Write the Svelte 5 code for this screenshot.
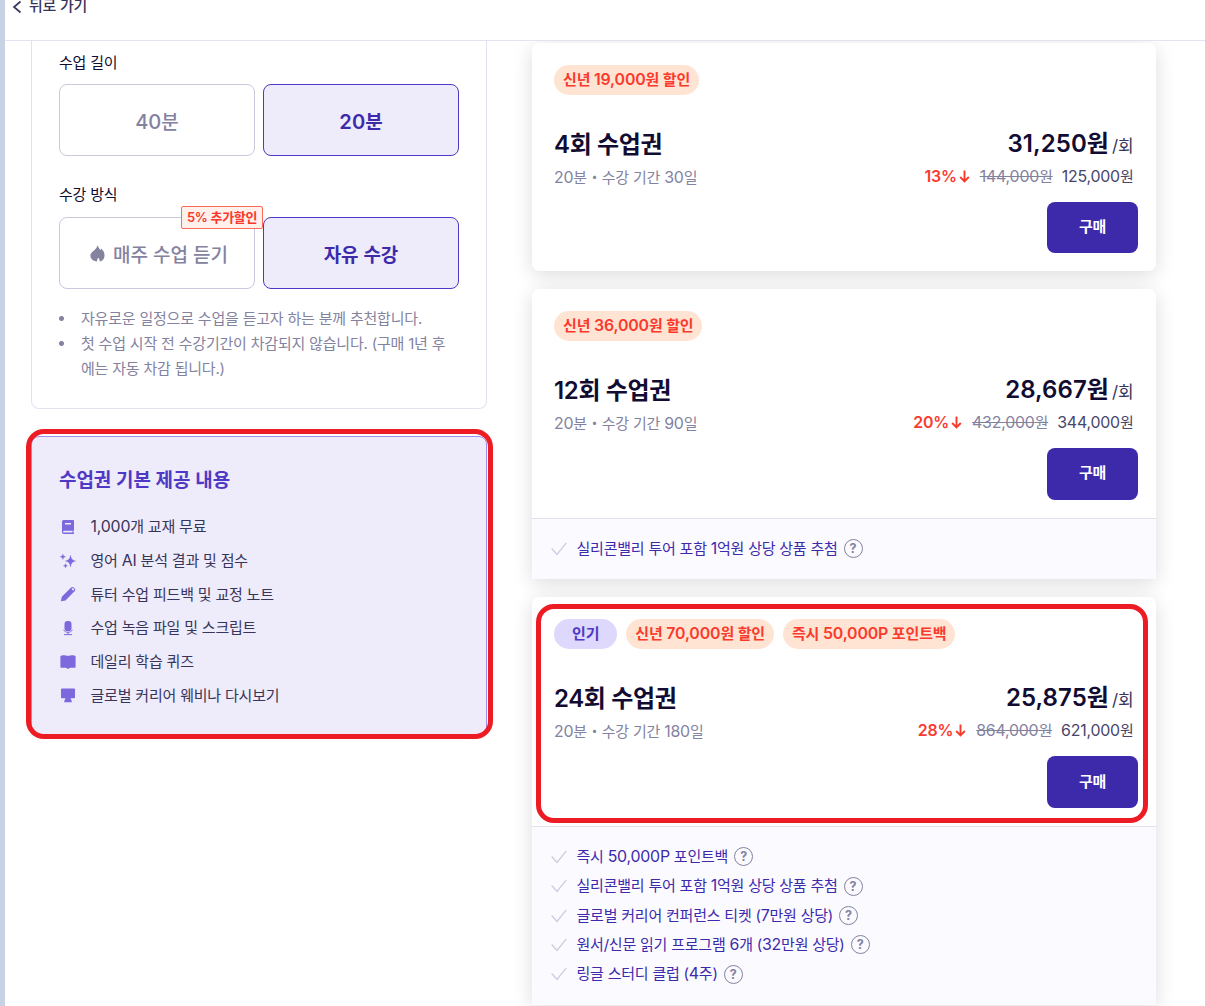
<script lang="ts">
  type Icon = 'book' | 'sparkle' | 'pencil' | 'mic' | 'open' | 'monitor';
  type Badge = { text: string; popular?: boolean };
  type Plan = {
    title: string;
    period: string;
    unit: string;
    rate: string;
    before: string;
    total: string;
    badges: Badge[];
    benefits: string[];
  };

  let length = $state<40 | 20>(20);
  let mode = $state<'weekly' | 'free'>('free');

  const includes: { icon: Icon; text: string }[] = [
    { icon: 'book', text: '1,000개 교재 무료' },
    { icon: 'sparkle', text: '영어 AI 분석 결과 및 점수' },
    { icon: 'pencil', text: '튜터 수업 피드백 및 교정 노트' },
    { icon: 'mic', text: '수업 녹음 파일 및 스크립트' },
    { icon: 'open', text: '데일리 학습 퀴즈' },
    { icon: 'monitor', text: '글로벌 커리어 웨비나 다시보기' },
  ];

  const plans: Plan[] = [
    {
      title: '4회 수업권',
      period: '20분・수강 기간 30일',
      unit: '31,250원',
      rate: '13%',
      before: '144,000원',
      total: '125,000원',
      badges: [{ text: '신년 19,000원 할인' }],
      benefits: [],
    },
    {
      title: '12회 수업권',
      period: '20분・수강 기간 90일',
      unit: '28,667원',
      rate: '20%',
      before: '432,000원',
      total: '344,000원',
      badges: [{ text: '신년 36,000원 할인' }],
      benefits: ['실리콘밸리 투어 포함 1억원 상당 상품 추첨'],
    },
    {
      title: '24회 수업권',
      period: '20분・수강 기간 180일',
      unit: '25,875원',
      rate: '28%',
      before: '864,000원',
      total: '621,000원',
      badges: [
        { text: '인기', popular: true },
        { text: '신년 70,000원 할인' },
        { text: '즉시 50,000P 포인트백' },
      ],
      benefits: [
        '즉시 50,000P 포인트백',
        '실리콘밸리 투어 포함 1억원 상당 상품 추첨',
        '글로벌 커리어 컨퍼런스 티켓 (7만원 상당)',
        '원서/신문 읽기 프로그램 6개 (32만원 상당)',
        '링글 스터디 클럽 (4주)',
      ],
    },
  ];

  // Latin runs are set slightly larger than Hangul so both look the same height.
  const runs = (text: string) => text.split(/([0-9A-Z,%]+)/).filter(Boolean);
  const isLatin = (run: string) => /^[0-9A-Z,%]/.test(run);
</script>

{#snippet mixed(text: string)}{#each runs(text) as run}{#if isLatin(run)}<span class="latin">{run}</span>{:else}{run}{/if}{/each}{/snippet}

<div class="page">
  <header class="topbar">
    <button class="back">
      <svg width="10" height="14" viewBox="0 0 10 14"><path d="M8.500 1.500 2 7l6.500 5.500" fill="none" stroke="currentColor" stroke-width="1.700" /></svg>
      <span>뒤로 가기</span>
    </button>
  </header>

  <main class="columns">
    <aside class="side">
      <section class="options">
        <h4>수업 길이</h4>
        <div class="choices">
          <button class="choice" class:active={length === 40} onclick={() => (length = 40)}><span>{@render mixed('40분')}</span></button>
          <button class="choice" class:active={length === 20} onclick={() => (length = 20)}><span>{@render mixed('20분')}</span></button>
        </div>
        <h4 class="second">수강 방식</h4>
        <div class="choices">
          <button class="choice" class:active={mode === 'weekly'} onclick={() => (mode = 'weekly')}>
            <svg class="flame" width="15" height="17" viewBox="0 0 15 17"><path d="M7.500 0c.5 2 2 3.500 2.800 5.200.5-.5.7-1 .8-1.600 2.400 1.900 3.600 4.400 3.400 7.400-.2 3-2 5-5 5.600.4-1.200.1-2.600-1.200-3.800-1.200 1.200-1.500 2.600-1.200 3.800C2.800 16 .4 13.500.4 10.500.4 6.500 7 5 7.500 0Z" fill="currentColor" /></svg>
            <span>매주 수업 듣기</span>
            <span class="extra">5% 추가할인</span>
          </button>
          <button class="choice" class:active={mode === 'free'} onclick={() => (mode = 'free')}>자유 수강</button>
        </div>
        <ul class="notes">
          <li>자유로운 일정으로 수업을 듣고자 하는 분께 추천합니다.</li>
          <li>첫 수업 시작 전 수강기간이 차감되지 않습니다. (구매 1년 후<br />에는 자동 차감 됩니다.)</li>
        </ul>
      </section>

      <section class="included">
        <h3>수업권 기본 제공 내용</h3>
        <ul>
          {#each includes as item}
            <li>
              <svg width="16" height="16" viewBox="0 0 16 16" fill="currentColor">
                {#if item.icon === 'book'}
                  <path fill-rule="evenodd" d="M3.500 1h9.500a1 1 0 0 1 1 1v9.500h-.6v2h.6V15H4a2 2 0 0 1-2-2V2.500A1.500 1.500 0 0 1 3.500 1ZM5 4v1.600h6V4H5Zm-1 7.700a.9.9 0 0 0 0 1.800h8.500v-1.800H4Z" />
                {:else if item.icon === 'sparkle'}
                  <path d="M10.500 2.200c.9 4 1.700 4.900 5.300 5.800-3.600.9-4.400 1.800-5.300 5.900-.9-4.100-1.700-5-5.300-5.900 3.600-.9 4.400-1.800 5.300-5.800ZM2.900 1c.5 1.900.9 2.300 2.700 2.700-1.800.5-2.200.9-2.700 2.800C2.400 4.600 2 4.200.2 3.700 2 3.300 2.400 2.900 2.900 1ZM5.500 10.600c.4 1.500.7 1.800 2.200 2.200-1.500.4-1.800.7-2.200 2.200-.4-1.500-.7-1.800-2.200-2.200 1.500-.4 1.800-.7 2.200-2.200Z" stroke="currentColor" stroke-width=".3" />
                {:else if item.icon === 'pencil'}
                  <path fill-rule="evenodd" d="M.9 15.300l.9-4.600 8.300-8.300 3.700 3.700-8.300 8.300-4.600.9ZM10.800 1.700a2.300 2.300 0 0 1 3.200 0l.5.5a2.300 2.300 0 0 1 0 3.200l-.7.700-3.700-3.700.7-.7Zm1.300.8-.6.6 1.600 1.600.6-.6a1.100 1.100 0 0 0-1.600-1.600Z" />
                {:else if item.icon === 'mic'}
                  <rect x="4.500" y="1" width="7" height="10.300" rx="3" />
                  <path d="M3.600 9.800c1.600 3.400 7.200 3.400 8.800 0M8 12.500v2M4 14.600h8" fill="none" stroke="currentColor" stroke-width="1" />
                {:else if item.icon === 'open'}
                  <path d="M1.200 1.700C3.500 1 6 1.200 8 2.100c2-.9 4.500-1.100 6.800-.4.5.1.8.4.8.9v10.400c0 .5-.3.8-.8.8h-4.600L8 15l-2.200-1.200H1.200c-.5 0-.8-.3-.8-.8V2.600c0-.5.3-.8.8-.9Z" />
                {:else}
                  <path d="M2 1.500h12a1 1 0 0 1 1 1v7.800a1 1 0 0 1-1 1h-3.500l1.300 3v.9H4.200v-.9l1.300-3H2a1 1 0 0 1-1-1V2.500a1 1 0 0 1 1-1Z" />
                {/if}
              </svg>
              <span>{@render mixed(item.text)}</span>
            </li>
          {/each}
        </ul>
      </section>
    </aside>

    <section class="plans">
      {#each plans as plan, i}
        <article class="plan" class:simple={!plan.benefits.length} class:marked={i === 2}>
          <div class="summary">
            <div class="badges">
              {#each plan.badges as badge}
                <span class="badge" class:popular={badge.popular}>{@render mixed(badge.text)}</span>
              {/each}
            </div>
            <div class="info">
              <div>
                <h2>{plan.title}</h2>
                <p class="period">{@render mixed(plan.period)}</p>
              </div>
              <div class="price">
                <p class="unit"><strong>{plan.unit}</strong><span>/회</span></p>
                <p class="total">
                  <b>{@render mixed(plan.rate)}</b>
                  <svg width="11" height="13" viewBox="0 0 11 13"><path d="M5.500.5v10.500M1.200 7l4.300 4.300L9.800 7" fill="none" stroke="currentColor" stroke-width="1.900" /></svg>
                  <s>{@render mixed(plan.before)}</s>
                  <span>{@render mixed(plan.total)}</span>
                </p>
              </div>
            </div>
            <button class="buy">구매</button>
          </div>
          {#if plan.benefits.length}
            <ul class="benefits">
              {#each plan.benefits as benefit}
                <li>
                  <svg class="check" width="16" height="14" viewBox="0 0 16 14"><path d="M.7 6.500 6 12.500 15.300.8" fill="none" stroke="currentColor" stroke-width="1.300" /></svg>
                  <span class="benefit">{@render mixed(benefit)}</span>
                  <span class="help">?</span>
                </li>
              {/each}
            </ul>
          {/if}
        </article>
      {/each}
    </section>
  </main>
</div>

<style>
  :global(body) {
    overflow: hidden;
  }
  .page {
    box-sizing: border-box;
    width: 1205px;
    height: 1006px;
    overflow: hidden;
    border-left: 5px solid #c7d2e4;
    background: #fff;
    color: #120c32;
    font-family: Inter, 'Noto Sans CJK KR', sans-serif;
    font-size: 15px;
    letter-spacing: -0.2px;
    word-break: keep-all;
  }
  .latin {
    font-size: 1.06em;
  }
  h2,
  h3,
  h4,
  p,
  ul {
    margin: 0;
    padding: 0;
  }
  ul {
    list-style: none;
  }
  button {
    padding: 0;
    border: 0;
    background: none;
    font: inherit;
    letter-spacing: inherit;
    color: inherit;
    cursor: pointer;
  }

  .topbar {
    display: flex;
    align-items: flex-start;
    height: 40px;
    border-bottom: 1px solid #e3e2f3;
  }
  .back {
    display: flex;
    align-items: center;
    gap: 7px;
    height: 12px;
    margin-left: 7px;
    color: #38355b;
    font-weight: 500;
    line-height: 12px;
    white-space: nowrap;
  }
  .back svg {
    margin-top: 1px;
  }
  .back span {
    margin-top: -1px;
  }

  .columns {
    display: flex;
    height: 965px;
    padding-left: 26px;
    overflow: hidden;
  }
  .side {
    width: 456px;
    flex: none;
  }
  .options {
    box-sizing: border-box;
    height: 368px;
    padding: 10px 27px 0;
    border: 1px solid #e0e2f1;
    border-top: 0;
    border-radius: 0 0 8px 8px;
  }
  h4 {
    height: 24px;
    margin-bottom: 9px;
    font-size: 15px;
    line-height: 24px;
    font-weight: 400;
  }
  h4.second {
    margin-top: 27px;
    margin-bottom: 10px;
  }
  .choices {
    display: flex;
    gap: 8px;
  }
  .choice {
    position: relative;
    display: flex;
    align-items: center;
    justify-content: center;
    box-sizing: border-box;
    width: 196px;
    height: 72px;
    border: 1px solid #c9c8dc;
    border-radius: 8px;
    color: #83829f;
    font-size: 19px;
    font-weight: 500;
    letter-spacing: 0;
    white-space: nowrap;
  }
  .choice.active {
    border-color: #4e38c5;
    background: #eeebfa;
    color: #3c2aab;
    font-weight: 600;
  }
  .flame {
    margin: 0 8px 0 4px;
  }
  .extra {
    position: absolute;
    top: -12px;
    right: -9px;
    box-sizing: border-box;
    width: 82px;
    height: 23px;
    border: 1px solid #fb6c5b;
    border-radius: 2px;
    background: #fff0ec;
    color: #f9382b;
    font-size: 13px;
    line-height: 20px;
    font-weight: 600;
    letter-spacing: -0.3px;
    text-align: center;
  }
  .notes {
    margin-top: 17px;
    color: #83829f;
    line-height: 25px;
  }
  .notes li {
    padding-left: 22px;
    white-space: nowrap;
    background: radial-gradient(circle at 2.500px 12.500px, #83829f 2px, transparent 3px) no-repeat;
  }

  .included {
    position: relative;
    box-sizing: border-box;
    height: 300px;
    margin-top: 27px;
    padding: 29px 27px 0;
    border: 1px solid #9e8eea;
    border-radius: 8px 8px 4px 4px;
    background: #eeebfa;
  }
  .included::after,
  .marked::after {
    content: '';
    position: absolute;
    z-index: 2;
    box-sizing: border-box;
    border: 5px solid #ed1c24;
    border-radius: 18px;
    pointer-events: none;
  }
  .included::after {
    top: -8px;
    left: -6px;
    width: 467px;
    height: 310px;
  }
  .marked::after {
    top: 7px;
    left: 4px;
    width: 612px;
    height: 219px;
  }
  .included h3 {
    height: 30px;
    color: #4e38c5;
    font-size: 19px;
    line-height: 30px;
    font-weight: 600;
    letter-spacing: -0.05px;
  }
  .included ul {
    margin-top: 13px;
  }
  .included li {
    display: flex;
    align-items: center;
    gap: 14.500px;
    height: 33.700px;
    color: #38355b;
    white-space: nowrap;
  }
  .included li svg {
    margin: 2px 0 0 1px;
    color: #7d69dd;
  }

  .plans {
    width: 624px;
    margin-left: 45px;
    padding-top: 2px;
  }
  .plan {
    position: relative;
    margin-bottom: 18px;
    border-radius: 8px 8px 0 0;
    box-shadow: 0 4px 20px rgba(0, 0, 0, 0.14);
  }
  /* card bodies stay above the shadows of their neighbours */
  .summary,
  .benefits {
    position: relative;
    z-index: 1;
  }
  .summary {
    display: flex;
    flex-direction: column;
    box-sizing: border-box;
    height: 229px;
    padding: 22px 18px 0 22px;
    border-radius: 8px 8px 0 0;
    background: #fff;
  }
  .simple,
  .simple .summary {
    border-radius: 8px;
  }
  .simple .summary {
    height: 228px;
  }
  .badges {
    display: flex;
    gap: 9px;
    height: 29.500px;
  }
  .badge {
    padding: 1px 9px 0;
    border-radius: 15px;
    background: #ffe4d4;
    color: #fa3a2d;
    line-height: 28.500px;
    font-weight: 600;
    letter-spacing: -0.15px;
    white-space: nowrap;
  }
  .badge.popular {
    padding: 1px 18px 0;
    background: #ded8fc;
    color: #4e38c5;
  }
  .info {
    display: flex;
    justify-content: space-between;
    margin-top: 32.500px;
    padding-right: 4.500px;
    white-space: nowrap;
  }
  h2 {
    height: 34px;
    font-size: 24px;
    line-height: 35px;
    font-weight: 600;
    letter-spacing: -0.35px;
  }
  .period {
    height: 24px;
    margin-top: 5px;
    color: #83829f;
    line-height: 24px;
  }
  .price {
    display: flex;
    flex-direction: column;
    align-items: flex-end;
  }
  .unit {
    display: flex;
    align-items: baseline;
    gap: 3px;
    height: 34px;
    line-height: 34px;
  }
  .unit strong {
    font-size: 24px;
    font-weight: 600;
    letter-spacing: 0.05px;
  }
  .unit span {
    color: #38355b;
    font-size: 17px;
    letter-spacing: -0.1px;
  }
  .total {
    display: flex;
    align-items: center;
    height: 24px;
    margin-top: 4px;
    color: #47466a;
    line-height: 24px;
  }
  .total b,
  .total svg {
    color: #fa3a2d;
    font-weight: 600;
  }
  .total svg {
    margin: 0 0 1px 2px;
  }
  .total s {
    margin: 0 9px 0 10px;
    color: #83829f;
  }
  .buy {
    align-self: flex-end;
    width: 91px;
    height: 51.500px;
    margin-top: 12px;
    padding-bottom: 4px;
    border-radius: 8px;
    background: #3c2aab;
    color: #fff;
    font-weight: 700;
    letter-spacing: -0.4px;
  }
  .simple .buy {
    height: 51px;
  }
  .benefits {
    padding: 14.500px 19px 16.500px;
    border-top: 1px solid #e0e2f1;
    background: #fbfaff;
    color: #3c2aab;
  }
  .benefits li {
    display: flex;
    align-items: center;
    height: 29.300px;
    white-space: nowrap;
  }
  .check {
    margin: 1px 9.500px 0 0;
    color: #ceccdf;
  }
  .benefit {
    margin-bottom: 1.500px;
    letter-spacing: -0.22px;
  }
  .help {
    box-sizing: border-box;
    width: 19px;
    height: 19px;
    margin: 1px 0 0 6px;
    border: 1.500px solid #83829f;
    border-radius: 50%;
    color: #83829f;
    font-size: 12.500px;
    line-height: 17px;
    font-weight: 700;
    letter-spacing: 0;
    text-align: center;
  }
</style>
